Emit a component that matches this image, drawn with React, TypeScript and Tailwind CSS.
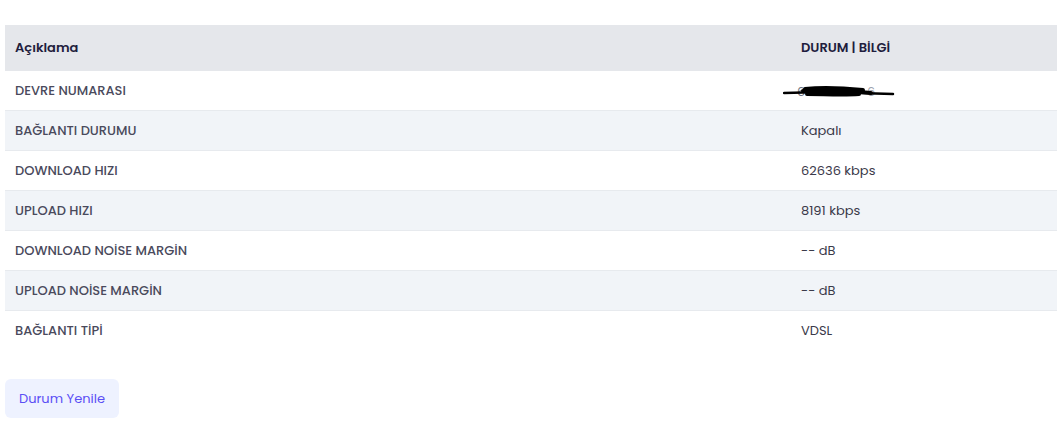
const rows = [
  { label: 'DEVRE NUMARASI', value: null },
  { label: 'BAĞLANTI DURUMU', value: 'Kapalı' },
  { label: 'DOWNLOAD HIZI', value: '62636 kbps' },
  { label: 'UPLOAD HIZI', value: '8191 kbps' },
  { label: 'DOWNLOAD NOİSE MARGİN', value: '-- dB' },
  { label: 'UPLOAD NOİSE MARGİN', value: '-- dB' },
  { label: 'BAĞLANTI TİPİ', value: 'VDSL' },
]

function Redacted() {
  return (
    <span className="relative inline-block h-5 w-[112px] -ml-[18px] align-middle">
      <span className="absolute left-[14px] top-[1px] text-[#6b7280]">6</span>
      <span className="absolute left-[84px] top-[1px] text-[#9ca3af]">6</span>
      <svg className="absolute left-0 top-0" width="112" height="20" viewBox="0 0 112 20">
        <path d="M1 12 L40 11 L110 13" stroke="#000" strokeWidth="2.5" fill="none" strokeLinecap="round" />
        <path d="M22 8 C40 6 60 7 80 9 M20 10 C45 9 70 10 88 12 M24 13 C40 13 60 14 76 13" stroke="#000" strokeWidth="4" fill="none" strokeLinecap="round" />
      </svg>
    </span>
  )
}

export default function App() {
  return (
    <div className="bg-white min-h-screen pt-[25px] px-[5px] pr-0 font-['Poppins','Inter',sans-serif] text-[13px]">
      <div className="w-[1052px]">
        {/* Header */}
        <div className="flex h-[46px] items-center bg-[#e5e7eb] font-semibold text-[#1f1d3d]">
          <div className="w-[786px] pl-[10px]">Açıklama</div>
          <div className="pl-[10px]">DURUM | BİLGİ</div>
        </div>

        {rows.map((r, i) => (
          <div
            key={r.label}
            className={`flex h-[40px] items-center text-[#3b3a4a] ${i % 2 === 1 ? 'bg-[#f1f4f8]' : 'bg-white'} ${i < rows.length - 1 ? 'border-b border-[#e7eaee]' : ''}`}
          >
            <div className="w-[786px] pl-[10px] font-medium text-[#4a4a5c]">{r.label}</div>
            <div className="pl-[10px]">{r.value ?? <Redacted />}</div>
          </div>
        ))}
      </div>

      <button className="mt-[28px] h-[39px] px-[14px] rounded-md bg-[#eef2ff] text-[#5b4ff5] text-[13px]">
        Durum Yenile
      </button>
    </div>
  )
}
